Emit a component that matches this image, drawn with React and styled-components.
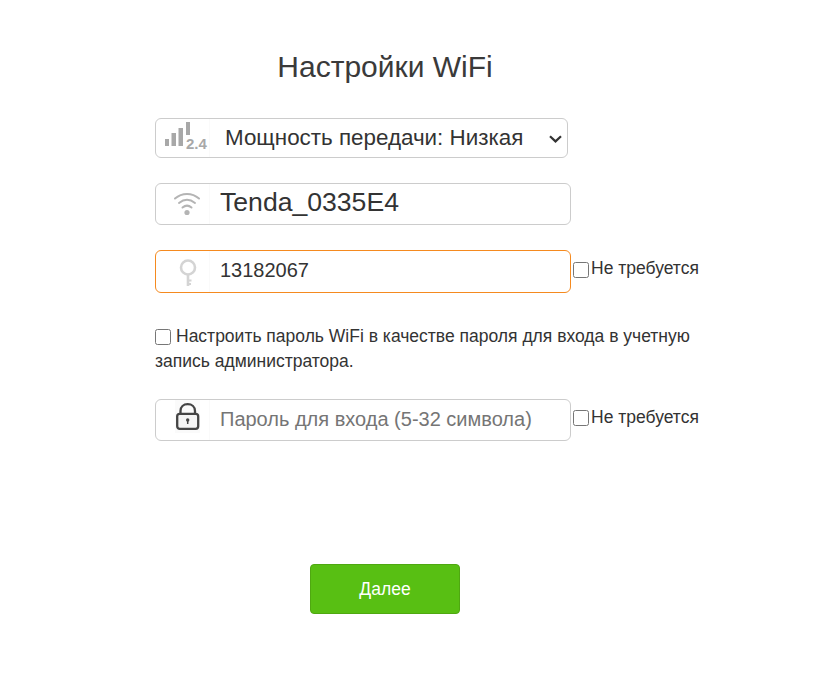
import styled, { createGlobalStyle } from "styled-components";

const GlobalStyle = createGlobalStyle`
  html, body {
    margin: 0;
    background: #fff;
    font-family: "Liberation Sans", Arial, sans-serif;
    color: #333;
  }
`;

function SignalIcon() {
  return (
    <svg width="44" height="32" viewBox="0 0 44 32" overflow="visible">
      <g fill="#a8a8a8">
        <rect x="-1" y="17" width="4" height="7" />
        <rect x="5.5" y="11" width="4.5" height="13" />
        <rect x="12.5" y="6" width="4.5" height="18" />
        <rect x="20" y="0" width="4" height="13" />
      </g>
      <text x="20" y="27" fontFamily="Liberation Sans" fontSize="15" fontWeight="700" fill="#a8a8a8">
        2.4
      </text>
    </svg>
  );
}

function WifiIcon() {
  return (
    <svg width="28" height="28" viewBox="0 0 28 28" fill="none" stroke="#b4b4b4" strokeWidth="2" strokeLinecap="round">
      <path d="M1 8.5C8 2.5 18 2.5 25 8.5" />
      <path d="M5 13C10 9 16 9 21 13" />
      <path d="M8.5 17.5C11.5 15 14.5 15 17.5 17.5" />
      <circle cx="13" cy="22.5" r="2.6" fill="#b4b4b4" stroke="none" />
    </svg>
  );
}

function KeyIcon() {
  return (
    <svg width="22" height="32" viewBox="0 0 22 32" fill="none" stroke="#d4d4d4" strokeWidth="2.6">
      <circle cx="11" cy="11.5" r="7" />
      <path d="M11 18.5V30" />
      <path d="M11 24.5H14.5M11 28H14" strokeWidth="2" />
    </svg>
  );
}

function LockIcon() {
  return (
    <LockSvg width="24" height="27" viewBox="0 0 24 27" fill="none" stroke="#444" strokeWidth="2.3" overflow="visible">
      <rect x="-1" y="-3" width="25" height="33" fill="#fafafa" stroke="none" />
      <path d="M4.5 11V8C4.5 4 7.5 1.2 11.7 1.2S19 4 19 8V11" />
      <rect x="1.2" y="10.8" width="21" height="15" rx="2.5" fill="#f4f4f4" />
      <circle cx="11.7" cy="17" r="1.7" fill="#444" stroke="none" />
      <path d="M11.7 17.5V21" strokeWidth="1.5" />
    </LockSvg>
  );
}

function ChevronIcon() {
  return (
    <Chevron width="14" height="8" viewBox="0 0 14 8" fill="none" stroke="#333" strokeWidth="2.2">
      <path d="M1 1.2L6.5 6.4L12 1.2" />
    </Chevron>
  );
}

function App() {
  return (
    <>
      <GlobalStyle />
      <Page>
        <Title>Настройки WiFi</Title>

        <PowerField>
          <IconCell>
            <SignalIcon />
          </IconCell>
          <PowerSelect defaultValue="low">
            <option value="low">Мощность передачи: Низкая</option>
            <option value="mid">Мощность передачи: Средняя</option>
            <option value="high">Мощность передачи: Высокая</option>
          </PowerSelect>
          <ChevronIcon />
        </PowerField>

        <Row $top={25}>
          <Field $height={42}>
            <IconCell>
              <WifiIcon />
            </IconCell>
            <TextInput $size={26.6} $lift={4} defaultValue="Tenda_0335E4" />
          </Field>
        </Row>

        <Row $top={25}>
          <Field $height={43} $focused>
            <IconCell>
              <KeyIcon />
            </IconCell>
            <TextInput $size={20} defaultValue="13182067" />
          </Field>
          <NoneLabel>
            <Check type="checkbox" />
            Не требуется
          </NoneLabel>
        </Row>

        <SameLabel>
          <SameCheck type="checkbox" />
          Настроить пароль WiFi в качестве пароля для входа в учетную запись администратора.
        </SameLabel>

        <Row $top={25}>
          <Field $height={42}>
            <IconCell>
              <LockIcon />
            </IconCell>
            <TextInput $size={20} placeholder="Пароль для входа (5-32 символа)" />
          </Field>
          <NoneLabel>
            <Check type="checkbox" />
            Не требуется
          </NoneLabel>
        </Row>

        <NextButton type="button">Далее</NextButton>
      </Page>
    </>
  );
}

export default App;

const Page = styled.div`
  width: 460px;
  margin-left: 155px;
  padding-top: 48px;
  height: 634px;
`;

const Title = styled.h1`
  margin: 0 0 33px;
  height: 37px;
  line-height: 37px;
  font-size: 30px;
  font-weight: 400;
  text-align: center;
  color: #3a3a3a;
`;

const Row = styled.div`
  display: flex;
  align-items: center;
  margin-top: ${(p) => p.$top}px;
`;

const Field = styled.div`
  display: flex;
  flex-shrink: 0;
  box-sizing: border-box;
  width: 416px;
  height: ${(p) => p.$height}px;
  background: #fff;
  border: 1px solid ${(p) => (p.$focused ? "#f58a1f" : "#ccc")};
  border-radius: 6px;
`;

const PowerField = styled(Field)`
  align-items: center;
  width: 413px;
  height: 40px;
  padding-right: 4px;
`;

const IconCell = styled.div`
  display: flex;
  flex-shrink: 0;
  align-self: stretch;
  align-items: center;
  justify-content: center;
  box-sizing: border-box;
  width: 54px;
  padding-left: 10px;
  border-right: 1px solid #fafafa;
`;

const LockSvg = styled.svg`
  margin-bottom: 7px;
`;

const PowerSelect = styled.select`
  flex: 1;
  min-width: 0;
  height: 100%;
  padding: 0 0 2px 15px;
  border: 0;
  outline: 0;
  background: transparent;
  appearance: none;
  font-family: inherit;
  font-size: 22.4px;
  color: #333;
`;

const Chevron = styled.svg`
  flex-shrink: 0;
  margin-top: 1px;
`;

const TextInput = styled.input`
  flex: 1;
  min-width: 0;
  padding: 0 10px ${(p) => p.$lift ?? 2}px;
  border: 0;
  outline: 0;
  background: transparent;
  border-radius: 6px;
  font-family: inherit;
  font-size: ${(p) => p.$size}px;
  color: #333;
  &::placeholder {
    color: #757575;
  }
`;

const NoneLabel = styled.label`
  display: flex;
  flex-shrink: 0;
  align-items: center;
  margin-bottom: 6px;
  font-size: 17.5px;
  white-space: nowrap;
  color: #333;
`;

const Check = styled.input`
  width: 16px;
  height: 16px;
  margin: 2px 2px 0 2px;
`;

const SameLabel = styled.label`
  display: block;
  width: 545px;
  margin-top: 31px;
  font-size: 17.5px;
  line-height: 25px;
  color: #333;
`;

const SameCheck = styled.input`
  width: 16px;
  height: 16px;
  margin: 0 5px 0 0;
  vertical-align: -3px;
`;

const NextButton = styled.button`
  display: block;
  box-sizing: border-box;
  width: 150px;
  height: 50px;
  margin: 123px auto 0;
  background: #58bf13;
  border: 1px solid #4fa811;
  border-radius: 4px;
  font-family: inherit;
  font-size: 17.5px;
  color: #fff;
`;
